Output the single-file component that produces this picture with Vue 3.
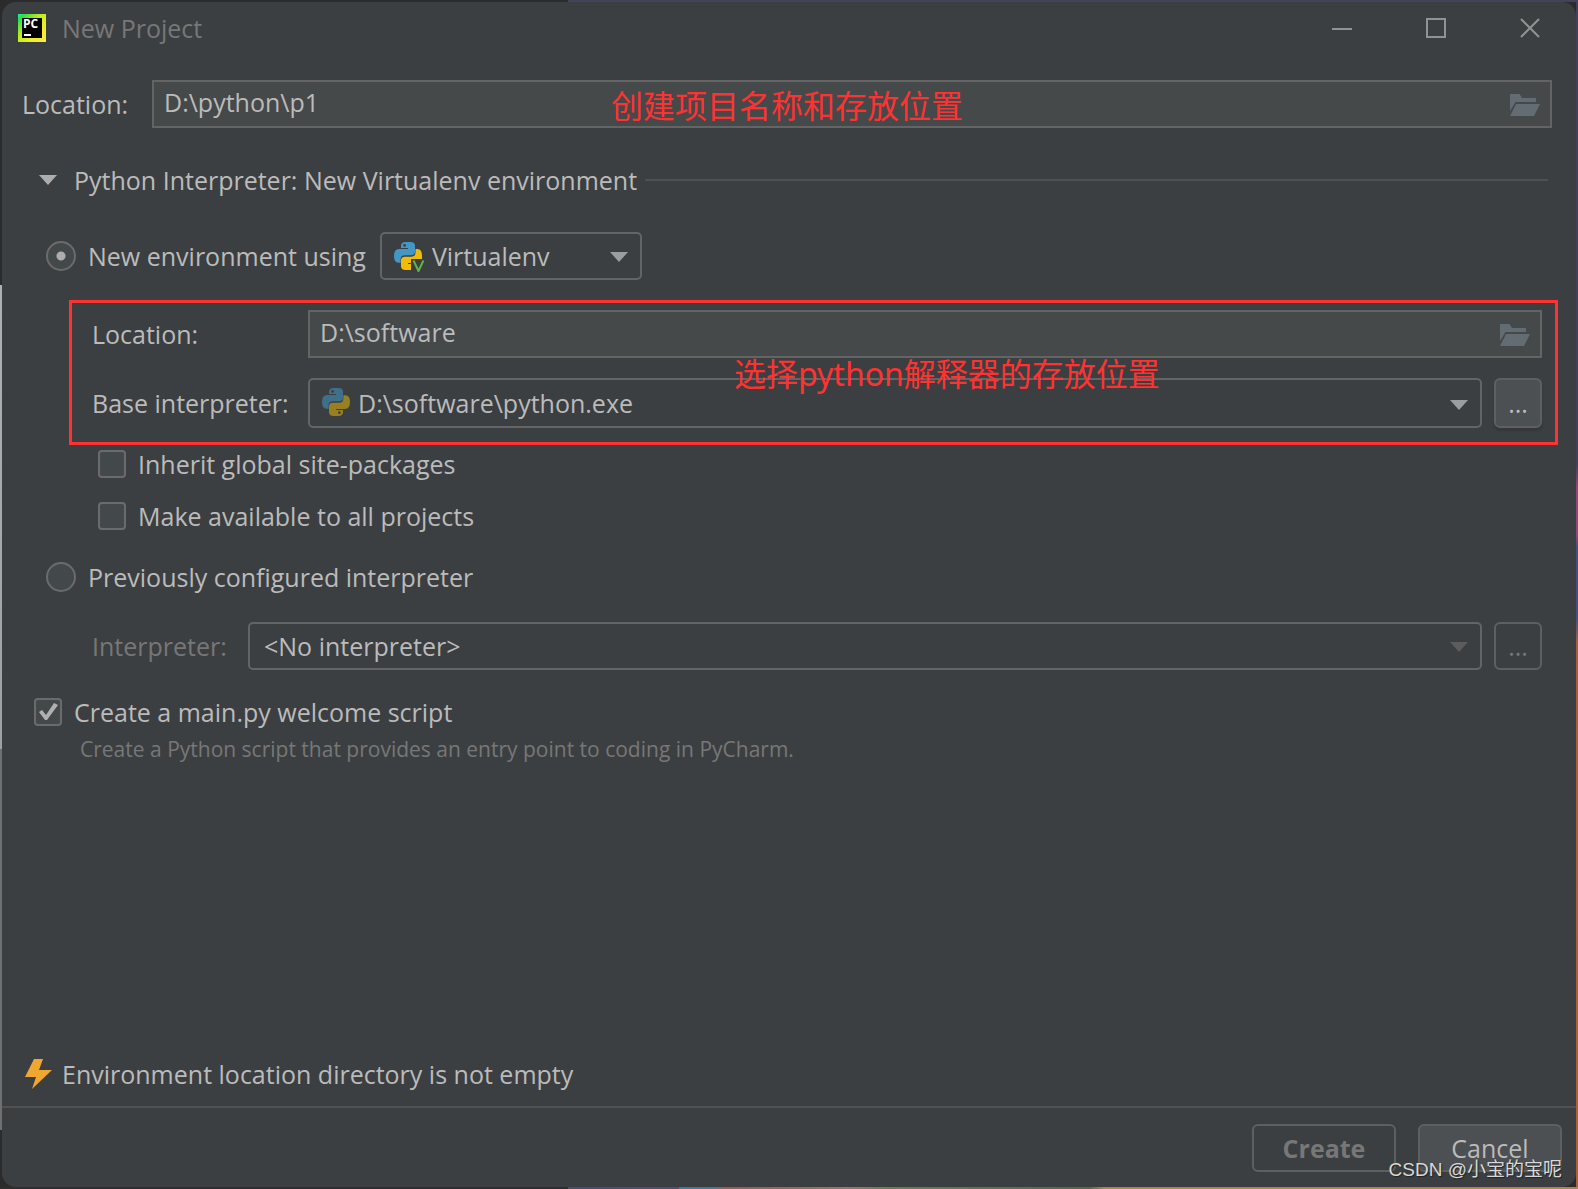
<script setup>
import { ref } from 'vue'

const projectPath = ref('D:\\python\\p1')
const envPath = ref('D:\\software')
const mode = ref('new')
const inherit = ref(false)
const shared = ref(false)
const welcome = ref(true)

const snake =
  'M7 6V4Q7 0 11.500 0H16.500Q21 0 21 4V9.500Q21 13.300 17.200 13.300H11Q6.600 13.300 6.600 17.500V20.700H4.500Q0 20.700 0 14Q0 7 5 7H14V6ZM9.200 3.400a1.400 1.400 0 1 0 2.800 0a1.400 1.400 0 1 0 -2.800 0Z'
const folder = 'M0 0H9.500L12 4H26V8H5.500L0 17ZM6 10H30L24 22H0Z'
</script>

<template>
  <div class="desktop">
    <main class="dialog">
      <header class="titlebar">
        <svg class="logo" viewBox="0 0 28 28" aria-hidden="true">
          <defs>
            <linearGradient id="frame" x1="0" y1="0" x2="1" y2="1">
              <stop offset="0" stop-color="#21e8a0" />
              <stop offset="0.120" stop-color="#2be04a" />
              <stop offset="0.400" stop-color="#b5ee1c" />
              <stop offset="0.700" stop-color="#f2ec2a" />
              <stop offset="1" stop-color="#f6ee48" />
            </linearGradient>
          </defs>
          <rect width="28" height="28" fill="url(#frame)" />
          <rect x="4" y="4" width="20" height="20" fill="#000" />
          <text x="5" y="14" font-size="12" font-weight="700" fill="#fff">PC</text>
          <rect x="6" y="20" width="7" height="2" fill="#fff" />
        </svg>
        <h1>New Project</h1>
        <nav class="controls">
          <button type="button" aria-label="Minimize">
            <svg viewBox="0 0 20 20"><path d="M0 11H20" /></svg>
          </button>
          <button type="button" aria-label="Maximize">
            <svg viewBox="0 0 20 20"><path d="M1 1H19V19H1Z" /></svg>
          </button>
          <button type="button" aria-label="Close">
            <svg viewBox="0 0 20 20"><path d="M1 1L19 19M19 1L1 19" /></svg>
          </button>
        </nav>
      </header>

      <form class="body" @submit.prevent>
        <div class="row project">
          <label for="project-path">Location:</label>
          <div class="field">
            <input id="project-path" v-model="projectPath" type="text" />
            <svg class="folder" viewBox="0 0 30 22" aria-hidden="true"><path :d="folder" /></svg>
            <span class="note">创建项目名称和存放位置</span>
          </div>
        </div>

        <div class="row section">
          <svg class="arrow" viewBox="0 0 18 10" aria-hidden="true"><path d="M0 0H18L9 10Z" /></svg>
          <h2>Python Interpreter: New Virtualenv environment</h2>
          <hr />
        </div>

        <div class="row new-env">
          <input id="mode-new" v-model="mode" type="radio" name="mode" value="new" />
          <label for="mode-new">New environment using</label>
          <div class="combo tool">
            <select aria-label="Environment tool"><option>Virtualenv</option></select>
            <svg class="python" viewBox="0 0 30 30" aria-hidden="true">
              <path :d="snake" fill="#4397c4" fill-rule="evenodd" />
              <path d="M23.500 7H21.500V10.500Q21.500 14.700 17 14.700H11Q7 14.700 7 18.500V24Q7 28 11.500 28H17V22H14V21H17V17H28V14Q28 7 23.500 7Z" fill="#f0bc0a" />
              <path d="M19.500 18.500L24.500 29L29.500 18.500" fill="none" stroke="#3c3f41" stroke-width="4" />
              <path d="M19.500 18.500L24.500 29L29.500 18.500" fill="none" stroke="#62b543" stroke-width="2" />
            </svg>
            <svg class="arrow" viewBox="0 0 18 10" aria-hidden="true"><path d="M0 0H18L9 10Z" /></svg>
          </div>
        </div>

        <div class="marked">
          <div class="row">
            <label for="env-path">Location:</label>
            <div class="field">
              <input id="env-path" v-model="envPath" type="text" />
              <svg class="folder" viewBox="0 0 30 22" aria-hidden="true"><path :d="folder" /></svg>
            </div>
          </div>
          <div class="row">
            <label for="base">Base interpreter:</label>
            <div class="combo base">
              <select id="base"><option>D:\software\python.exe</option></select>
              <svg class="python" viewBox="0 0 30 30" aria-hidden="true">
                <path :d="snake" fill="#3f708b" fill-rule="evenodd" />
                <path :d="snake" fill="#977f22" fill-rule="evenodd" transform="rotate(180 14 14)" />
              </svg>
              <svg class="arrow" viewBox="0 0 18 10" aria-hidden="true"><path d="M0 0H18L9 10Z" /></svg>
            </div>
            <button type="button" class="more" aria-label="Browse interpreters">...</button>
          </div>
          <span class="note">选择python解释器的存放位置</span>
        </div>

        <div class="options">
          <div class="row">
            <input id="inherit" v-model="inherit" type="checkbox" />
            <label for="inherit">Inherit global site-packages</label>
          </div>
          <div class="row">
            <input id="shared" v-model="shared" type="checkbox" />
            <label for="shared">Make available to all projects</label>
          </div>
        </div>

        <div class="row previous">
          <input id="mode-prev" v-model="mode" type="radio" name="mode" value="previous" />
          <label for="mode-prev">Previously configured interpreter</label>
        </div>

        <div class="row existing">
          <label for="existing">Interpreter:</label>
          <div class="combo">
            <select id="existing" disabled><option>&lt;No interpreter&gt;</option></select>
            <svg class="arrow" viewBox="0 0 18 10" aria-hidden="true"><path d="M0 0H18L9 10Z" /></svg>
          </div>
          <button type="button" class="more" disabled aria-label="Browse existing interpreters">...</button>
        </div>

        <div class="row welcome">
          <input id="welcome" v-model="welcome" type="checkbox" />
          <label for="welcome">Create a main.py welcome script</label>
        </div>
        <p class="hint">Create a Python script that provides an entry point to coding in PyCharm.</p>

        <p class="warning">
          <svg viewBox="0 0 27 30" aria-hidden="true"><path d="M9 0H18L14 11H27L7 30L11 18H0Z" /></svg>
          Environment location directory is not empty
        </p>
      </form>

      <footer class="actions">
        <button type="submit" class="create" disabled>Create</button>
        <button type="button" class="cancel">Cancel</button>
      </footer>
    </main>
    <span class="watermark">CSDN @小宝的宝呢</span>
  </div>
</template>

<style>
body {
  background: #2b2b2b;
}
</style>

<style scoped>
* {
  box-sizing: border-box;
}
.desktop {
  position: relative;
  display: flex;
  min-height: 100vh;
  padding: 2px;
  font-family: "Open Sans", "Noto Sans", "Noto Sans CJK SC", sans-serif;
  font-size: 25px;
  line-height: 36px;
  color: #bbbbbb;
  background:
    linear-gradient(90deg, #2f2f2f 36%, #4a4e70 36%, #54506c 43%, #3e789e 43%, #3e789e 45%, #8a6058 46%, #8c7a72 54%, #6d7d50 56%, #566650 69%, #a8874a 70%, #a8874a) bottom / 100% 2px no-repeat,
    linear-gradient(90deg, #2b2b2b 36%, #45415a 36%) top / 100% 2px no-repeat,
    linear-gradient(#443f5c 39%, #8a4a7c 41%, #8a4a7c 45%, #46507a 46%, #46507a 52%, #a35c48 54%, #a3643c) right / 2px 100% no-repeat,
    linear-gradient(#2b2b2b 24%, #b0b0b0 24%, #a0a0a0 63%, #707070 63%, #707070 95%, #2b2b2b 95%) left / 2px 100% no-repeat,
    #2b2b2b;
}
.dialog {
  flex: 1;
  min-width: 0;
  display: flex;
  flex-direction: column;
  background: #3c3f41;
  border-radius: 14px;
}
.titlebar {
  display: flex;
  align-items: center;
  height: 52px;
  padding: 0 34px 0 16px;
}
.logo {
  width: 28px;
  height: 28px;
}
h1,
h2,
p {
  margin: 0;
  font-size: inherit;
  font-weight: 400;
}
h1 {
  margin-left: 16px;
  color: #777777;
}
.controls {
  display: flex;
  gap: 70px;
  margin-left: auto;
}
.controls button {
  display: flex;
  padding: 0 2px;
  border: 0;
  background: none;
}
.controls svg {
  width: 20px;
  height: 20px;
  fill: none;
  stroke: #929292;
  stroke-width: 2;
}
.body {
  flex: 1;
  display: flex;
  flex-direction: column;
  padding: 26px 0 14px;
}
.row {
  display: flex;
  align-items: center;
}
.project {
  padding: 0 24px 0 20px;
}
.project label {
  width: 130px;
}
.field,
.combo {
  position: relative;
  flex: 1;
  min-width: 0;
}
.field input,
select {
  display: block;
  width: 100%;
  height: 48px;
  margin: 0;
  border: 2px solid #646464;
  font: inherit;
  color: #bbbbbb;
  outline: 0;
}
.field input {
  padding: 0 56px 4px 10px;
  border-radius: 0;
  background: #45494a;
}
select {
  padding: 0 40px 0 10px;
  border-radius: 5px;
  background: #3c3f41;
  appearance: none;
  opacity: 1;
}
.folder {
  position: absolute;
  right: 12px;
  top: 14px;
  width: 30px;
  height: 22px;
  fill: #626c72;
}
.note {
  position: absolute;
  font-family: "Noto Sans", "Noto Sans CJK SC", sans-serif;
  font-size: 32px;
  line-height: 40px;
  color: #ff3232;
  white-space: nowrap;
  pointer-events: none;
}
.project .note {
  left: 459px;
  top: 6px;
}
.arrow {
  width: 18px;
  height: 10px;
  fill: #adadad;
}
.section {
  margin-top: 34px;
  padding: 0 28px 0 37px;
}
.section h2 {
  margin: 0 8px 0 17px;
  white-space: nowrap;
}
hr {
  flex: 1;
  height: 2px;
  margin: 0;
  border: 0;
  background: #515151;
}
.new-env {
  margin-top: 34px;
  padding-left: 44px;
}
input[type="radio"],
input[type="checkbox"] {
  flex: none;
  width: 28px;
  height: 28px;
  margin: 0 12px 0 0;
  border: 2px solid #6b6b6b;
  border-radius: 4px;
  background: #43494a;
  appearance: none;
}
input[type="radio"] {
  width: 30px;
  height: 30px;
  border-radius: 50%;
}
input[type="radio"]:checked {
  background: radial-gradient(circle, #adadad 4px, #43494a 5px);
}
input[type="checkbox"]:checked::before {
  content: "";
  display: block;
  width: 24px;
  height: 24px;
  background: #b0b0b0;
  clip-path: polygon(3px 12px, 6px 10px, 10px 15px, 18px 3px, 22px 5px, 11px 20px, 9px 20px);
}
.combo .arrow {
  position: absolute;
  right: 14px;
  top: 20px;
  fill: #9b9ea0;
  pointer-events: none;
}
.combo.base .arrow {
  top: 22px;
}
.python {
  position: absolute;
  left: 14px;
  top: 10px;
  width: 30px;
  height: 30px;
  pointer-events: none;
}
.tool {
  flex: 0 0 262px;
  margin-left: 14px;
}
.tool select {
  padding-left: 50px;
}
.base select {
  height: 50px;
  padding-left: 48px;
}
.marked {
  position: relative;
  display: flex;
  flex-direction: column;
  gap: 20px;
  margin: 20px 18px 0 67px;
  padding: 7px 13px 14px 20px;
  border: 3px solid #ff3232;
}
.marked label {
  width: 216px;
}
.marked .note {
  left: 662px;
  top: 51px;
}
.more {
  width: 48px;
  height: 48px;
  margin-left: 12px;
  padding: 0;
  border: 2px solid #5e6060;
  border-radius: 6px;
  background: #4c5052;
  font: inherit;
  color: #bbbbbb;
}
.marked .more {
  height: 50px;
  box-shadow: 0 3px 2px #353739;
}
.more:disabled {
  background: none;
  color: #777777;
}
.options {
  display: flex;
  flex-direction: column;
  gap: 24px;
  margin-top: 5px;
  padding-left: 96px;
}
.options .row,
.welcome {
  height: 28px;
}
.previous {
  height: 30px;
  margin-top: 32px;
  padding-left: 44px;
}
.existing {
  margin-top: 30px;
  padding: 0 34px 0 90px;
}
.existing label {
  width: 156px;
  color: #777777;
}
.existing select {
  padding-left: 14px;
}
.existing .arrow {
  fill: #5c5c5c;
}
.welcome {
  margin-top: 28px;
  padding-left: 32px;
}
.hint {
  margin-top: 9px;
  padding-left: 78px;
  font-size: 21px;
  line-height: 28px;
  color: #777777;
}
.warning {
  display: flex;
  align-items: center;
  gap: 10px;
  margin-top: auto;
  padding-left: 23px;
}
.warning svg {
  width: 27px;
  height: 30px;
  fill: #f0a732;
}
.actions {
  display: flex;
  justify-content: flex-end;
  gap: 22px;
  padding: 16px 14px 15px;
  border-top: 2px solid #515151;
}
.actions button {
  width: 144px;
  height: 48px;
  padding: 0;
  border: 2px solid #5e6060;
  border-radius: 6px;
  font: inherit;
}
.actions .create {
  background: none;
  font-weight: 700;
  color: #777777;
}
.actions .cancel {
  background: #4c5052;
  color: #bbbbbb;
}
.watermark {
  position: absolute;
  right: 16px;
  bottom: 5px;
  font-family: "Liberation Sans", "Noto Sans CJK SC", sans-serif;
  font-size: 19px;
  line-height: 28px;
  color: #d8d8d8;
  text-shadow: 1px 1px 1px #222222;
  pointer-events: none;
}
</style>
